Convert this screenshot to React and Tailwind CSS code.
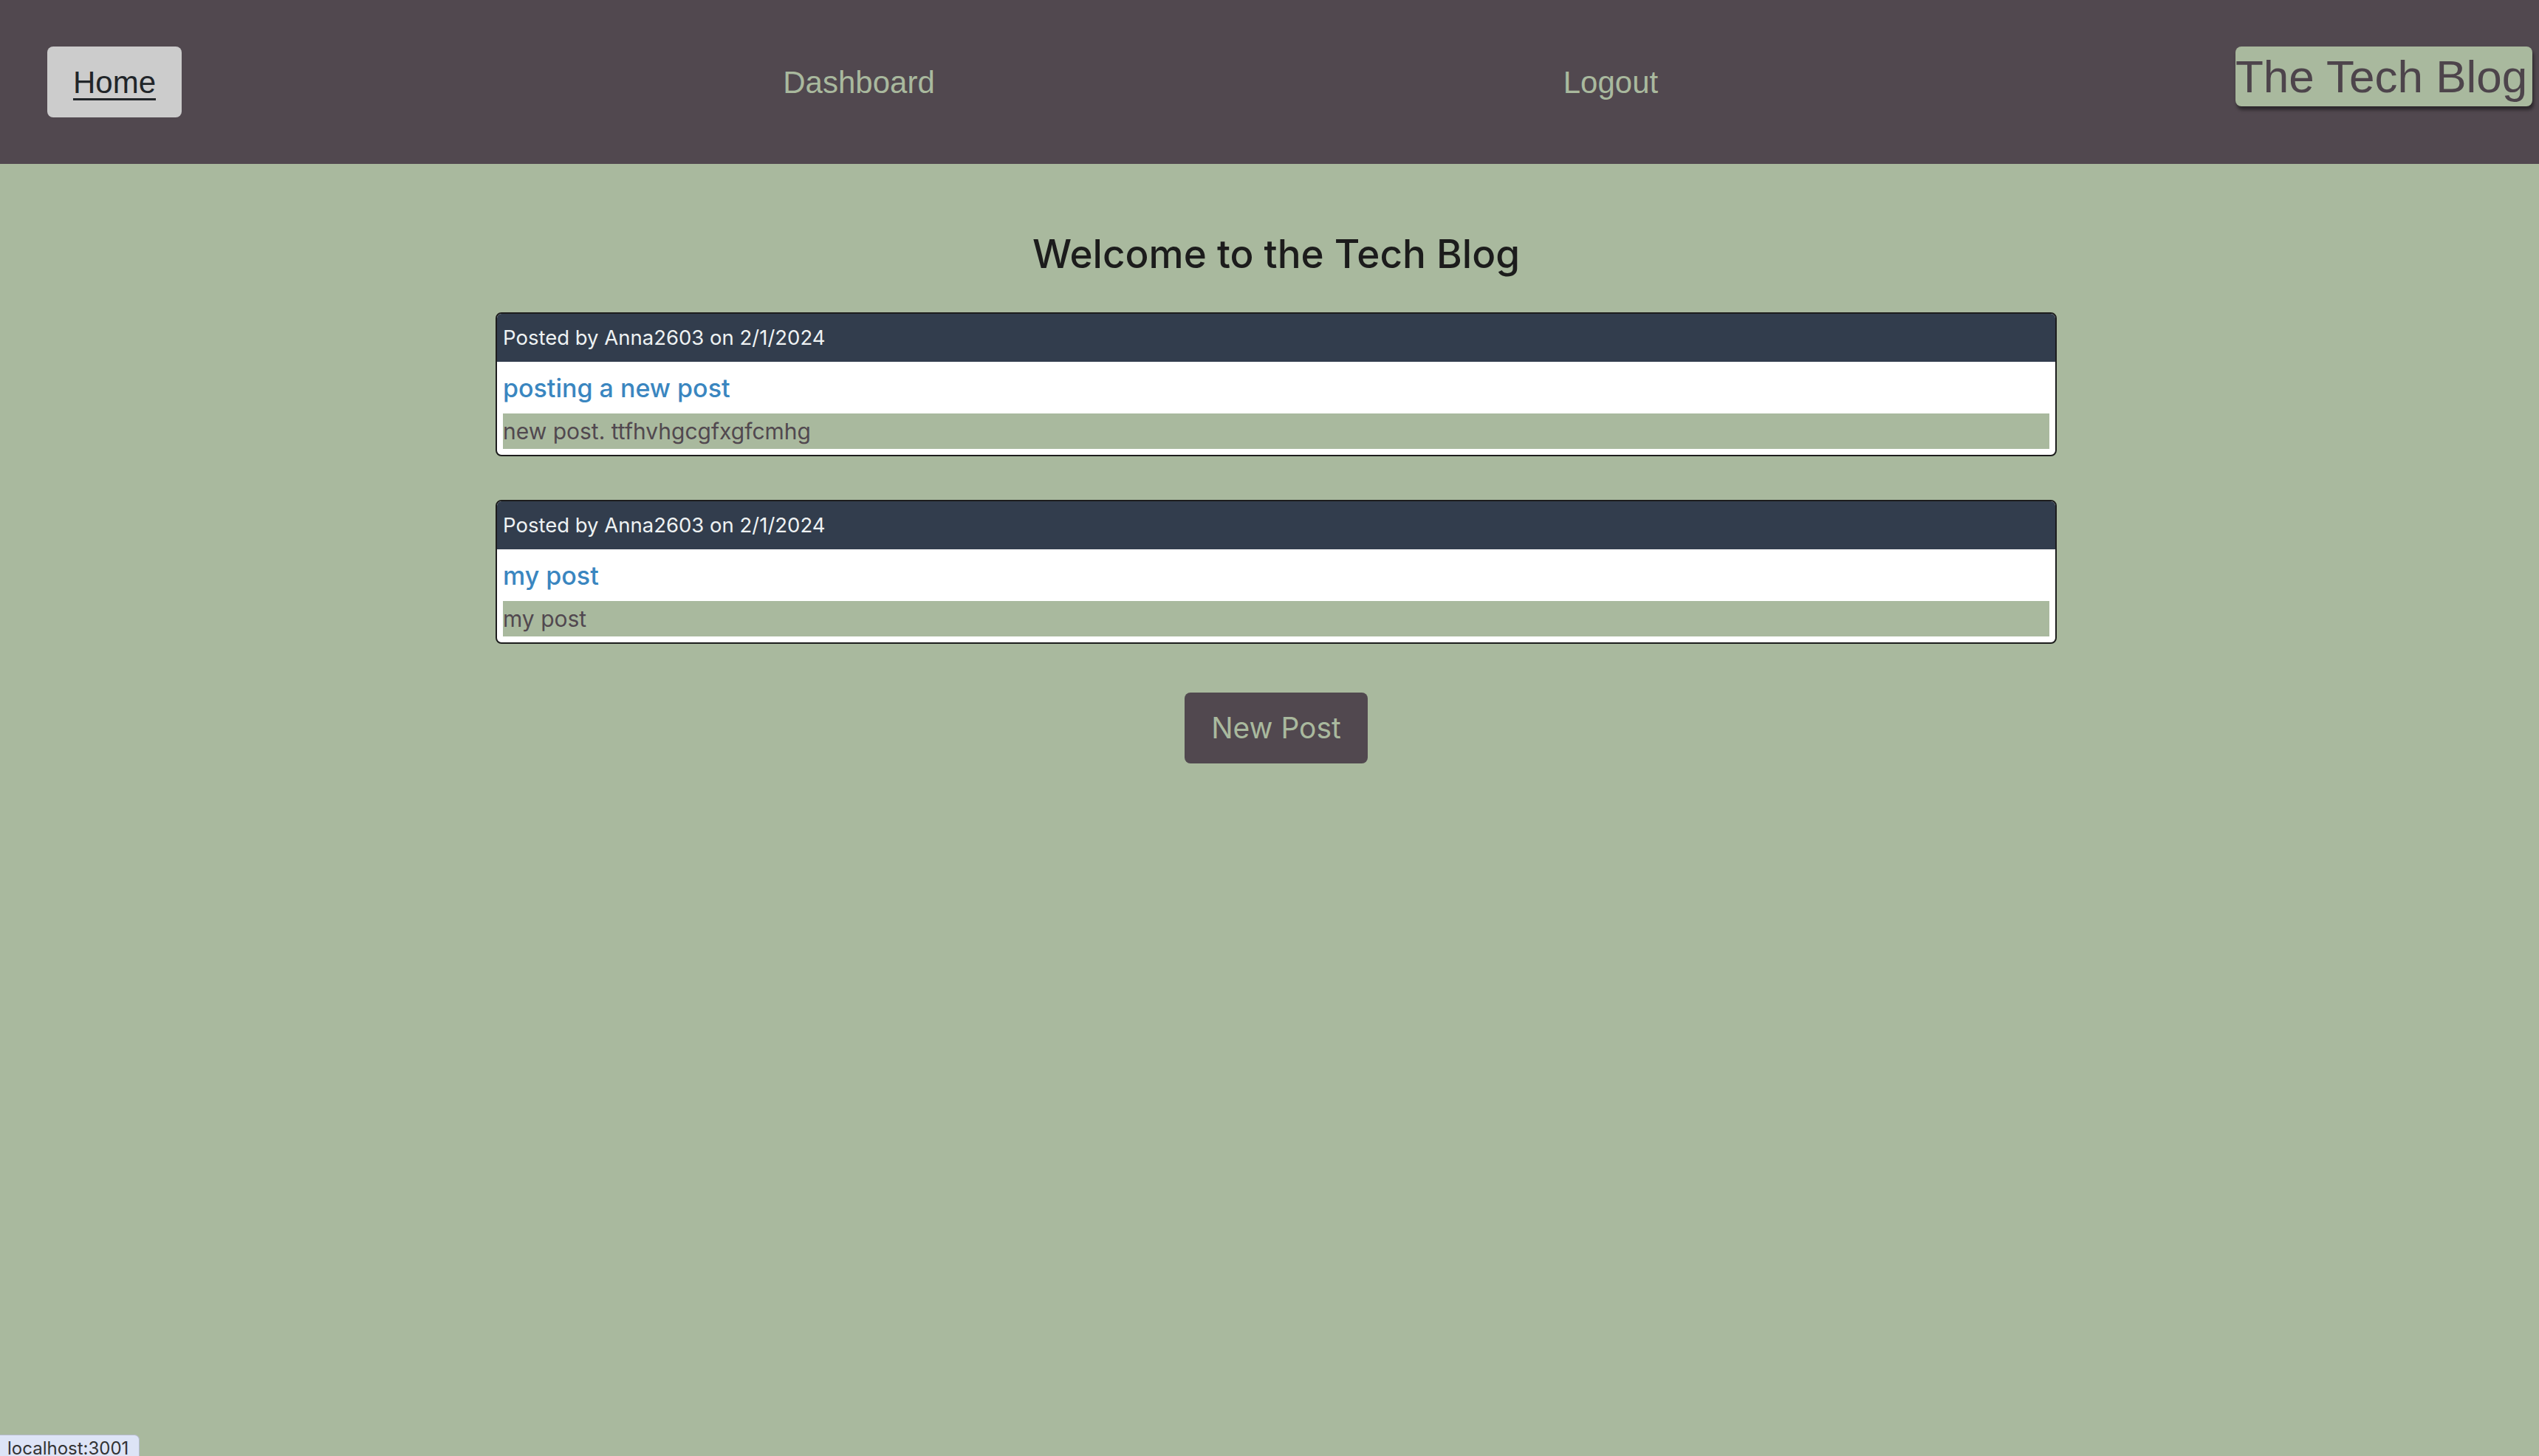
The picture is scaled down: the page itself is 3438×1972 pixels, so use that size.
import React from "react";

const posts = [
  { author: "Anna2603", date: "2/1/2024", title: "posting a new post", body: "new post. ttfhvhgcgfxgfcmhg" },
  { author: "Anna2603", date: "2/1/2024", title: "my post", body: "my post" },
];

function PostCard({ p }) {
  return (
    <div className="w-[2114px] rounded-[8px] border-2 border-[#1d1d1d] bg-white overflow-hidden">
      <div className="h-[65px] bg-[#323d4d] flex items-center pl-[8px] text-[27.5px] text-[#eef2f3] font-['Inter',sans-serif]">
        Posted by {p.author} on {p.date}
      </div>
      <div className="h-[70px] flex items-center pl-[8px] text-[34px] text-[#3a86c0] font-['Inter',sans-serif] font-medium">
        {p.title}
      </div>
      <div className="mx-[8px] h-[48px] bg-[#a9b99e] flex items-center text-[30px] text-[#51484f] font-['Inter',sans-serif]">
        {p.body}
      </div>
      <div className="h-[8px]" />
    </div>
  );
}

export default function App() {
  return (
    <div className="relative min-h-screen bg-[#a9b99e] font-['Liberation_Sans',Arial,sans-serif]">
      <header className="h-[222px] bg-[#51484f] flex items-center">
        <a className="ml-[64px] w-[182px] h-[96px] rounded-[8px] bg-[#cccccc] flex items-center justify-center text-[42px] text-[#212529] underline decoration-[3px] underline-offset-[7px]">
          Home
        </a>
        <a className="ml-[767px] w-[300px] text-center text-[42px] text-[#a9b99e]">Dashboard</a>
        <a className="ml-[718px] w-[300px] text-center text-[42px] text-[#a9b99e]">Logout</a>
        <h1 className="ml-[696px] self-start mt-[63px] w-[402px] h-[81px] rounded-[8px] bg-[#a9b99e] text-[62px] leading-[81px] text-[#4d444b] whitespace-nowrap shadow-[2px_5px_4px_rgba(0,0,0,0.45)]">
          The Tech Blog
        </h1>
      </header>

      <main className="flex flex-col items-center pl-[18px]">
        <h2 className="mt-[89px] text-[53px] leading-[66px] font-medium text-[#1c1c1c] font-['Inter',sans-serif]">
          Welcome to the Tech Blog
        </h2>
        <div className="mt-[46px] flex flex-col gap-[59px]">
          {posts.map((p, i) => (
            <PostCard key={i} p={p} />
          ))}
        </div>
        <button className="mt-[66px] w-[248px] h-[96px] rounded-[8px] bg-[#51484f] text-[39px] text-[#a9b99e] font-['Inter',sans-serif]">
          New Post
        </button>
      </main>

      <div className="absolute left-0 bottom-0 w-[189px] h-[29px] overflow-hidden rounded-tr-[7px] border border-l-0 border-b-0 border-[#b5bccb] bg-[#dde4f6] pl-[10px] pt-[3px] text-[24px] leading-[30px] text-[#333333] font-['Inter',sans-serif]">
        localhost:3001
      </div>
    </div>
  );
}
